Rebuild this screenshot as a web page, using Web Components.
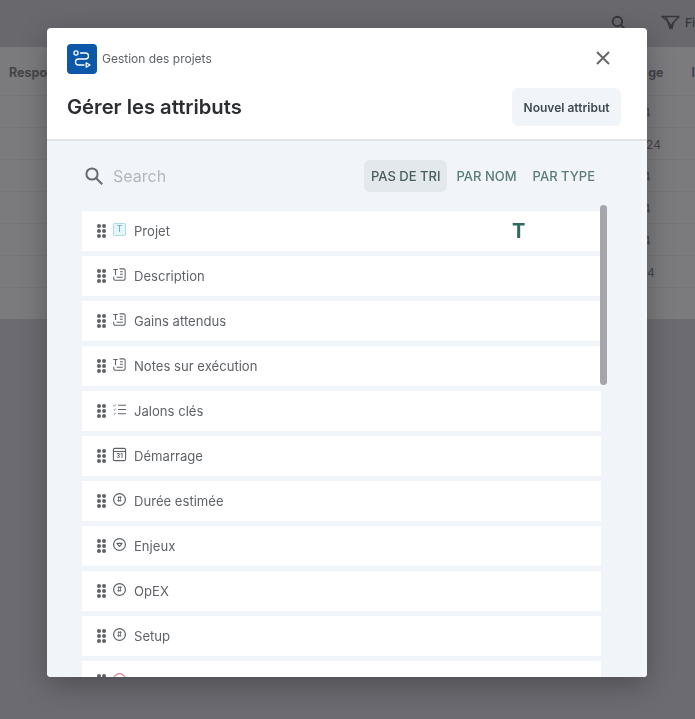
<!DOCTYPE html>
<html lang="fr">
<head>
<meta charset="utf-8">
<title>Gérer les attributs</title>
<style>
  html, body { margin: 0; height: 100%; overflow: hidden; background: #6c6b71; }
  body { font-family: Inter, "Liberation Sans", sans-serif; }
</style>
</head>
<body>
<app-backdrop></app-backdrop>

<attr-dialog module="Gestion des projets" heading="Gérer les attributs">
  <attr-row label="Projet" icon="text" marker="T"></attr-row>
  <attr-row label="Description" icon="longtext"></attr-row>
  <attr-row label="Gains attendus" icon="longtext"></attr-row>
  <attr-row label="Notes sur exécution" icon="longtext"></attr-row>
  <attr-row label="Jalons clés" icon="list"></attr-row>
  <attr-row label="Démarrage" icon="date"></attr-row>
  <attr-row label="Durée estimée" icon="number"></attr-row>
  <attr-row label="Enjeux" icon="choice"></attr-row>
  <attr-row label="OpEX" icon="number"></attr-row>
  <attr-row label="Setup" icon="number"></attr-row>
  <attr-row icon="alert"></attr-row>
</attr-dialog>

<script>
// icones des types d'attributs
const ICON_FONT = `font-family="Inter, 'Liberation Sans', sans-serif" text-anchor="middle"`;
const TYPE_ICONS = {
  text: `<rect x="1.5" y="1.5" width="13" height="13" rx="1.5" fill="#e6f5fa" stroke="#a9d6e5"/>
         <text x="8" y="11" font-size="9" font-weight="500" fill="#6fb3c9" ${ICON_FONT}>T</text>`,
  longtext: `<text x="3.8" y="8" font-size="8" font-weight="700" fill="#5f6368" ${ICON_FONT}>T</text>
             <path d="M8 2h4.5A1.5 1.5 0 0 1 14 3.5V12a2.2 2.2 0 0 1-2.2 2.2H4A2.2 2.2 0 0 1 1.8 12v-1.5" stroke="#5f6368" stroke-width="1.1" fill="none"/>
             <path d="M8.5 5h3M8.5 7.7h3M5 11h6.5" stroke="#5f6368" stroke-width="1.1" fill="none"/>`,
  list: `<path d="M6.5 3.5H15M6.5 8H15M6.5 12.5H15" stroke="#5f6368" stroke-width="1.2" fill="none"/>
         <path d="M1.5 3.5l1 1 1.5-2M1.5 8l1 1 1.5-2M1.5 12.5l1 1 1.5-2" stroke="#8a8d91" stroke-width="1" fill="none"/>`,
  date: `<rect x="1.5" y="1.5" width="13" height="13" rx="1.5" stroke="#5f6368" stroke-width="1.2" fill="none"/>
         <path d="M1.5 4.8h13" stroke="#5f6368" stroke-width="1.2"/>
         <text x="8" y="12" font-size="6.5" font-weight="700" fill="#5f6368" ${ICON_FONT}>31</text>`,
  number: `<circle cx="8" cy="8" r="6.3" stroke="#5f6368" stroke-width="1.3" fill="none"/>
           <text x="8" y="10.6" font-size="7.5" font-weight="700" fill="#5f6368" ${ICON_FONT}>#</text>`,
  choice: `<circle cx="8" cy="8" r="6.3" stroke="#5f6368" stroke-width="1.3" fill="none"/>
           <path d="M5.2 6.8h5.6L8 10.2z" stroke="#5f6368" stroke-width="1.2" stroke-linejoin="round" fill="none"/>`,
  alert: `<circle cx="8" cy="8" r="6.3" stroke="#d9828f" stroke-width="1.3" fill="none"/>`
};

class AppBackdrop extends HTMLElement {
  constructor() {
    super();
    this.attachShadow({ mode: "open" });
    // fond de page derriere le modal, seul ce qui depasse se voit
    const values = [["4", 643], ["24", 646], ["4", 643], ["4", 643], ["4", 643], ["4", 647], ["", 0]];
    const rows = values
      .map(([v, x]) => `<div class="row" style="padding-left:${x}px">${v}</div>`)
      .join("");
    this.shadowRoot.innerHTML = `
      <style>
        :host { display: block; height: 719px; overflow: hidden; }
        .toolbar {
          height: 47px;
          display: flex;
          align-items: center;
          padding: 0 0 3px 611px;
          gap: 35px;
          box-sizing: border-box;
          color: #37373b;
          font-size: 12px;
          font-weight: 500;
          white-space: nowrap;
          background: #69686d;
        }
        .filter { display: flex; align-items: center; gap: 5px; }
        svg { display: block; flex: none; }
        .table { background: #7b7b7e; height: 272px; overflow: hidden; }
        .head {
          height: 49px;
          display: flex;
          align-items: center;
          justify-content: space-between;
          padding: 2px 0 0 9px;
          font-size: 12.5px;
          font-weight: 700;
          color: #454548;
          border-bottom: 1px solid #757578;
          box-sizing: border-box;
        }
        .head span:last-child { display: flex; gap: 28px; }
        .row {
          height: 32px;
          line-height: 34px;
          font-size: 12px;
          color: #454548;
          border-bottom: 1px solid #757578;
          box-sizing: border-box;
          white-space: nowrap;
        }
      </style>
      <div class="toolbar">
        <svg width="15" height="15" viewBox="0 0 16 16" fill="none" stroke="#37373b" stroke-width="2">
          <circle cx="6.8" cy="6.8" r="5"/><path d="M10.5 10.5l4.5 4.5"/>
        </svg>
        <span class="filter">
          <svg width="19" height="15" viewBox="0 0 19 15" fill="none" stroke="#37373b" stroke-width="1.4" stroke-linejoin="round">
            <path d="M1 1.5h17L12.5 7.5 11 13.5 8 7.5z"/><path d="M5 1.5l4 12 3-6"/>
          </svg>
          Filtres
        </span>
      </div>
      <div class="table">
        <div class="head"><span>Responsable</span><span><span>ge</span><span>I</span></span></div>
        ${rows}
      </div>
    `;
  }
}

class SortTabs extends HTMLElement {
  constructor() {
    super();
    this.attachShadow({ mode: "open" });
    this.shadowRoot.innerHTML = `
      <style>
        :host { display: flex; gap: 2px; }
        button {
          all: unset;
          height: 32px;
          padding: 0 7px;
          border-radius: 6px;
          font: 500 13px Inter, "Liberation Sans", sans-serif;
          color: #5d7c7a;
          display: flex;
          align-items: center;
          white-space: nowrap;
        }
        button.on { background: #e2e8eb; color: #4b5d5e; }
      </style>
      <button class="on">PAS DE TRI</button>
      <button>PAR NOM</button>
      <button>PAR TYPE</button>
    `;
  }
}

class AttrRow extends HTMLElement {
  connectedCallback() {
    if (this.shadowRoot) return;
    this.attachShadow({ mode: "open" });
    const label = this.getAttribute("label") || "";
    const icon = TYPE_ICONS[this.getAttribute("icon")] || "";
    const marker = this.getAttribute("marker");
    const dots = "<i></i>".repeat(6);
    this.shadowRoot.innerHTML = `
      <style>
        :host {
          display: flex;
          align-items: center;
          position: relative;
          flex: none;
          height: 40px;
          width: 519px;
          padding-left: 15px;
          box-sizing: border-box;
          background: #fff;
          font-size: 13.1px;
          color: #5f6368;
        }
        .grip { display: grid; grid-template-columns: 4px 4px; gap: 1px; margin-right: 6px; }
        .grip i { width: 4px; height: 4px; border-radius: 50%; background: #5f6368; }
        svg { display: block; margin: -4px 7px 0 0; }
        .marker {
          position: absolute;
          left: 430px;
          top: 8px;
          font-size: 20px;
          line-height: 24px;
          font-weight: 700;
          color: #2f6b60;
        }
      </style>
      <div class="grip">${dots}</div>
      <svg width="15" height="15" viewBox="0 0 16 16">${icon}</svg>
      <span>${label}</span>
      ${marker ? `<span class="marker">${marker}</span>` : ""}
    `;
  }
}

class AttrDialog extends HTMLElement {
  connectedCallback() {
    if (this.shadowRoot) return;
    this.attachShadow({ mode: "open" });
    this.shadowRoot.innerHTML = `
      <style>
        :host {
          position: fixed;
          left: 47px;
          top: 28px;
          width: 600px;
          height: 649px;
          display: flex;
          flex-direction: column;
          background: #fff;
          border-radius: 4px;
          overflow: hidden;
          box-shadow: 0 8px 28px rgba(0, 0, 0, .28);
          color: #2b2d31;
        }
        header {
          flex: none;
          height: 113px;
          box-sizing: border-box;
          padding: 16px 26px 0 20px;
          border-bottom: 2px solid #e3e4e6;
        }
        .crumb { display: flex; align-items: center; gap: 5px; height: 30px; font-size: 12px; color: #5f6368; }
        .crumb span { margin-bottom: 2px; }
        .logo {
          width: 30px;
          height: 30px;
          border-radius: 4px;
          background: #0b57a8;
          display: flex;
          align-items: center;
          justify-content: center;
        }
        .close { margin: 0 10px 2px auto; display: block; }
        .title { display: flex; align-items: center; justify-content: space-between; margin-top: 14px; }
        h1 { margin: 0; font-size: 20.2px; line-height: 38px; font-weight: 600; }
        .add {
          all: unset;
          height: 38px;
          padding: 0 11.5px;
          display: flex;
          align-items: center;
          border-radius: 6px;
          background: #f1f4f9;
          font: 600 12px Inter, "Liberation Sans", sans-serif;
          color: #3f4a50;
        }
        .body {
          flex: 1;
          min-height: 0;
          display: flex;
          flex-direction: column;
          padding: 19px 0 0 35px;
          background: #f1f4f9;
          border-right: 5px solid #f5f6fa;
        }
        .tools { display: flex; align-items: center; height: 32px; padding-right: 40px; }
        .search { display: flex; align-items: center; gap: 9px; flex: 1; padding-left: 2px; font-size: 16px; color: #b4b8bd; }
        .list {
          position: relative;
          flex: 1;
          min-height: 0;
          margin-top: 13px;
          padding-top: 6px;
          display: flex;
          flex-direction: column;
          gap: 5px;
          overflow: hidden;
        }
        .thumb {
          position: absolute;
          left: 518px;
          top: 0;
          width: 7px;
          height: 180px;
          border-radius: 4px;
          background: #a5a5aa;
        }
      </style>
      <header>
        <div class="crumb">
          <div class="logo">
            <svg width="20" height="20" viewBox="0 0 20 20" fill="none" stroke="#fff" stroke-width="1.3" stroke-linecap="round" stroke-linejoin="round">
              <circle cx="4" cy="4" r="2.1"/>
              <path d="M8.5 4h5a3 3 0 0 1 0 6h-7a3 3 0 0 0 0 6H12"/>
              <path d="M14.2 13.8l3.8 2.2-3.8 2.2z"/>
            </svg>
          </div>
          <span>${this.getAttribute("module")}</span>
          <svg class="close" width="16" height="16" viewBox="0 0 16 16" fill="none" stroke="#666" stroke-width="2">
            <path d="M2 2l12 12M14 2L2 14"/>
          </svg>
        </div>
        <div class="title">
          <h1>${this.getAttribute("heading")}</h1>
          <button class="add">Nouvel attribut</button>
        </div>
      </header>
      <div class="body">
        <div class="tools">
          <div class="search">
            <svg width="20" height="20" viewBox="0 0 20 20" fill="none" stroke="#66696d" stroke-width="2">
              <circle cx="8" cy="8" r="5.6"/><path d="M12.2 12.2l6 6"/>
            </svg>
            <span>Search</span>
          </div>
          <sort-tabs></sort-tabs>
        </div>
        <div class="list">
          <slot></slot>
          <div class="thumb"></div>
        </div>
      </div>
    `;
  }
}

customElements.define("app-backdrop", AppBackdrop);
customElements.define("sort-tabs", SortTabs);
customElements.define("attr-row", AttrRow);
customElements.define("attr-dialog", AttrDialog);
</script>
</body>
</html>
